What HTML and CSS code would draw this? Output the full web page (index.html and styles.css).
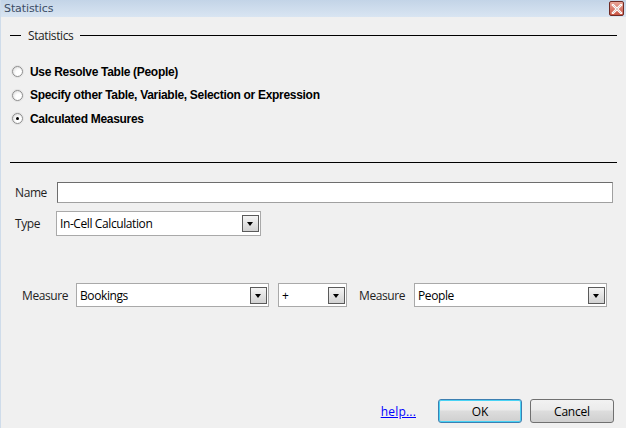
FILE: index.html
```html
<!DOCTYPE html>
<html lang="en">
  <head>
    <meta charset="UTF-8" />
    <title>Statistics</title>
    <link rel="stylesheet" href="styles.css">
  </head>
  <body>
    <div class="dialog">
      <div class="title-bar">
        <span class="title">Statistics</span>
        <button class="close-btn" aria-label="Close">
          <svg width="12" height="10" viewBox="0 0 12 10">
            <path d="M2 1 L10 9 M10 1 L2 9" stroke="#fff" stroke-width="2.4" stroke-linecap="square" />
            <path d="M2 1 L10 9 M10 1 L2 9" stroke="#7a1e12" stroke-width="0.6" fill="none" opacity="0.4" />
          </svg>
        </button>
      </div>

      <div class="dialog-body">
        <div class="group-title">
          <span class="dash"></span>
          <span class="group-text">Statistics</span>
          <span class="rule"></span>
        </div>

        <div class="options">
          <label class="option"><span class="radio"></span>Use Resolve Table (People)</label>
          <label class="option"><span class="radio"></span>Specify other Table, Variable, Selection or Expression</label>
          <label class="option"><span class="radio checked"></span>Calculated Measures</label>
        </div>

        <div class="separator"></div>

        <div class="form-row name-row">
          <span class="label">Name</span>
          <div class="text-input"></div>
        </div>
        <div class="form-row type-row">
          <span class="label">Type</span>
          <div class="combo type-combo">
            <span class="combo-value">In-Cell Calculation</span>
            <span class="combo-arrow"></span>
          </div>
        </div>

        <div class="measure-row">
          <span class="label">Measure</span>
          <div class="combo measure-combo">
            <span class="combo-value">Bookings</span>
            <span class="combo-arrow"></span>
          </div>
          <div class="combo op-combo">
            <span class="combo-value">+</span>
            <span class="combo-arrow"></span>
          </div>
          <span class="label second">Measure</span>
          <div class="combo measure-combo">
            <span class="combo-value">People</span>
            <span class="combo-arrow"></span>
          </div>
        </div>

        <div class="footer">
          <a href="#" class="help-link">help...</a>
          <button class="btn default">OK</button>
          <button class="btn">Cancel</button>
        </div>
      </div>
    </div>
  </body>
</html>
```

FILE: styles.css
```css
/* Reset */
body {
  margin: 0;
  padding: 0;
  background-color: #f0f0f0;
  font-family: "Open Sans", "Noto Sans", sans-serif;
  font-size: 12px;
  letter-spacing: -0.4px;
  color: #000;
}

.dialog {
  width: 626px;
  height: 428px;
  box-sizing: border-box;
  border-left: 1px solid #cfdcea;
  background-color: #f0f0f0;
  display: flex;
  flex-direction: column;
}

/* Title bar */
.title-bar {
  height: 17px;
  display: flex;
  align-items: center;
  justify-content: space-between;
  background: linear-gradient(#c3d4e7, #d9e5f2);
  padding: 0 2px 0 3px;
}

.title {
  font-family: "DejaVu Sans", sans-serif;
  font-size: 11px;
  color: #3c4d66;
  letter-spacing: -0.1px;
}

.close-btn {
  width: 15px;
  height: 15px;
  padding: 0;
  border: 1px solid #6e2a24;
  border-radius: 2px;
  background: linear-gradient(#e9a598, #c95443);
  display: flex;
  align-items: center;
  justify-content: center;
}

.dialog-body {
  flex: 1;
  display: flex;
  flex-direction: column;
  padding: 0 9px 0 9px;
}

/* Group header */
.group-title {
  display: flex;
  align-items: center;
  margin-top: 9px;
  height: 18px;
}

.dash {
  width: 11px;
  height: 1px;
  background: #000;
}

.group-text {
  padding: 0 7px;
  color: #1e1e1e;
}

.rule {
  flex: 1;
  height: 1px;
  background: #000;
}

/* Radio options */
.options {
  display: flex;
  flex-direction: column;
  gap: 6.5px;
  margin-top: 19px;
  padding-left: 2px;
}

.option {
  display: flex;
  align-items: center;
  font-family: "Liberation Sans", Arial, sans-serif;
  font-weight: bold;
  font-size: 12px;
  letter-spacing: -0.3px;
  height: 17px;
}

.radio {
  width: 11px;
  height: 11px;
  border-radius: 50%;
  border: 1px solid #8e8e8e;
  background: radial-gradient(circle at 65% 65%, #ffffff 35%, #d4d4d4 100%);
  box-shadow: 0 0 0 1px #e2e2e2;
  margin-right: 7px;
  box-sizing: border-box;
  position: relative;
}

.radio.checked::after {
  content: "";
  position: absolute;
  left: 3px;
  top: 3px;
  width: 3px;
  height: 3px;
  border-radius: 50%;
  background: #000;
}

.separator {
  height: 1px;
  background: #000;
  margin-top: 35px;
}

/* Form rows */
.form-row {
  display: flex;
  align-items: center;
  padding-left: 5px;
}

.label {
  color: #1e1e1e;
}

.name-row {
  margin-top: 19px;
}

.name-row .label {
  width: 42px;
}

.text-input {
  flex: 1;
  height: 19px;
  margin-right: 4px;
  background: #fff;
  border: 1px solid #a0a0a0;
  border-top-color: #6d6d6d;
  border-left-color: #6d6d6d;
}

.type-row {
  margin-top: 8px;
}

.type-row .label {
  width: 41px;
}

.combo {
  display: flex;
  align-items: center;
  justify-content: space-between;
  background: #fff;
  border: 1px solid #a9a9a9;
  box-sizing: border-box;
  padding: 0 1px 0 3px;
}

.type-combo {
  width: 205px;
  height: 25px;
}

.combo-arrow {
  width: 17px;
  height: 17px;
  box-sizing: border-box;
  border: 1px solid #5a5a5a;
  background: linear-gradient(#f4f4f4, #d2d2d2);
  position: relative;
}

.combo-arrow::after {
  content: "";
  position: absolute;
  left: 4px;
  top: 6px;
  border-left: 3.5px solid transparent;
  border-right: 3.5px solid transparent;
  border-top: 4px solid #000;
}

/* Measure line */
.measure-row {
  display: flex;
  align-items: center;
  margin-top: 47px;
  padding-left: 12px;
}

.measure-row .label {
  width: 44px;
  margin-right: 10px;
}

.measure-row .label.second {
  margin-left: 12px;
  margin-right: 11px;
}

.measure-combo {
  width: 193px;
  height: 24px;
}

.op-combo {
  width: 69px;
  height: 24px;
  margin-left: 9px;
}

/* Footer buttons */
.footer {
  margin-top: auto;
  margin-bottom: 5px;
  display: flex;
  align-items: center;
  justify-content: flex-end;
  padding-right: 3px;
}

.help-link {
  color: #0000ff;
  letter-spacing: 0.2px;
  margin-right: 14px;
}

.btn {
  width: 84px;
  height: 24px;
  font-family: "Open Sans", sans-serif;
  font-size: 12px;
  letter-spacing: -0.2px;
  color: #000;
  border: 1px solid #707070;
  border-radius: 3px;
  background: linear-gradient(#f2f2f2 0%, #ebebeb 45%, #dddddd 50%, #cfcfcf 100%);
  margin-left: 8px;
  padding: 0;
}

.btn.default {
  border-color: #3c7fb1;
  box-shadow: inset 0 0 0 1px #48d3f5;
}
```
